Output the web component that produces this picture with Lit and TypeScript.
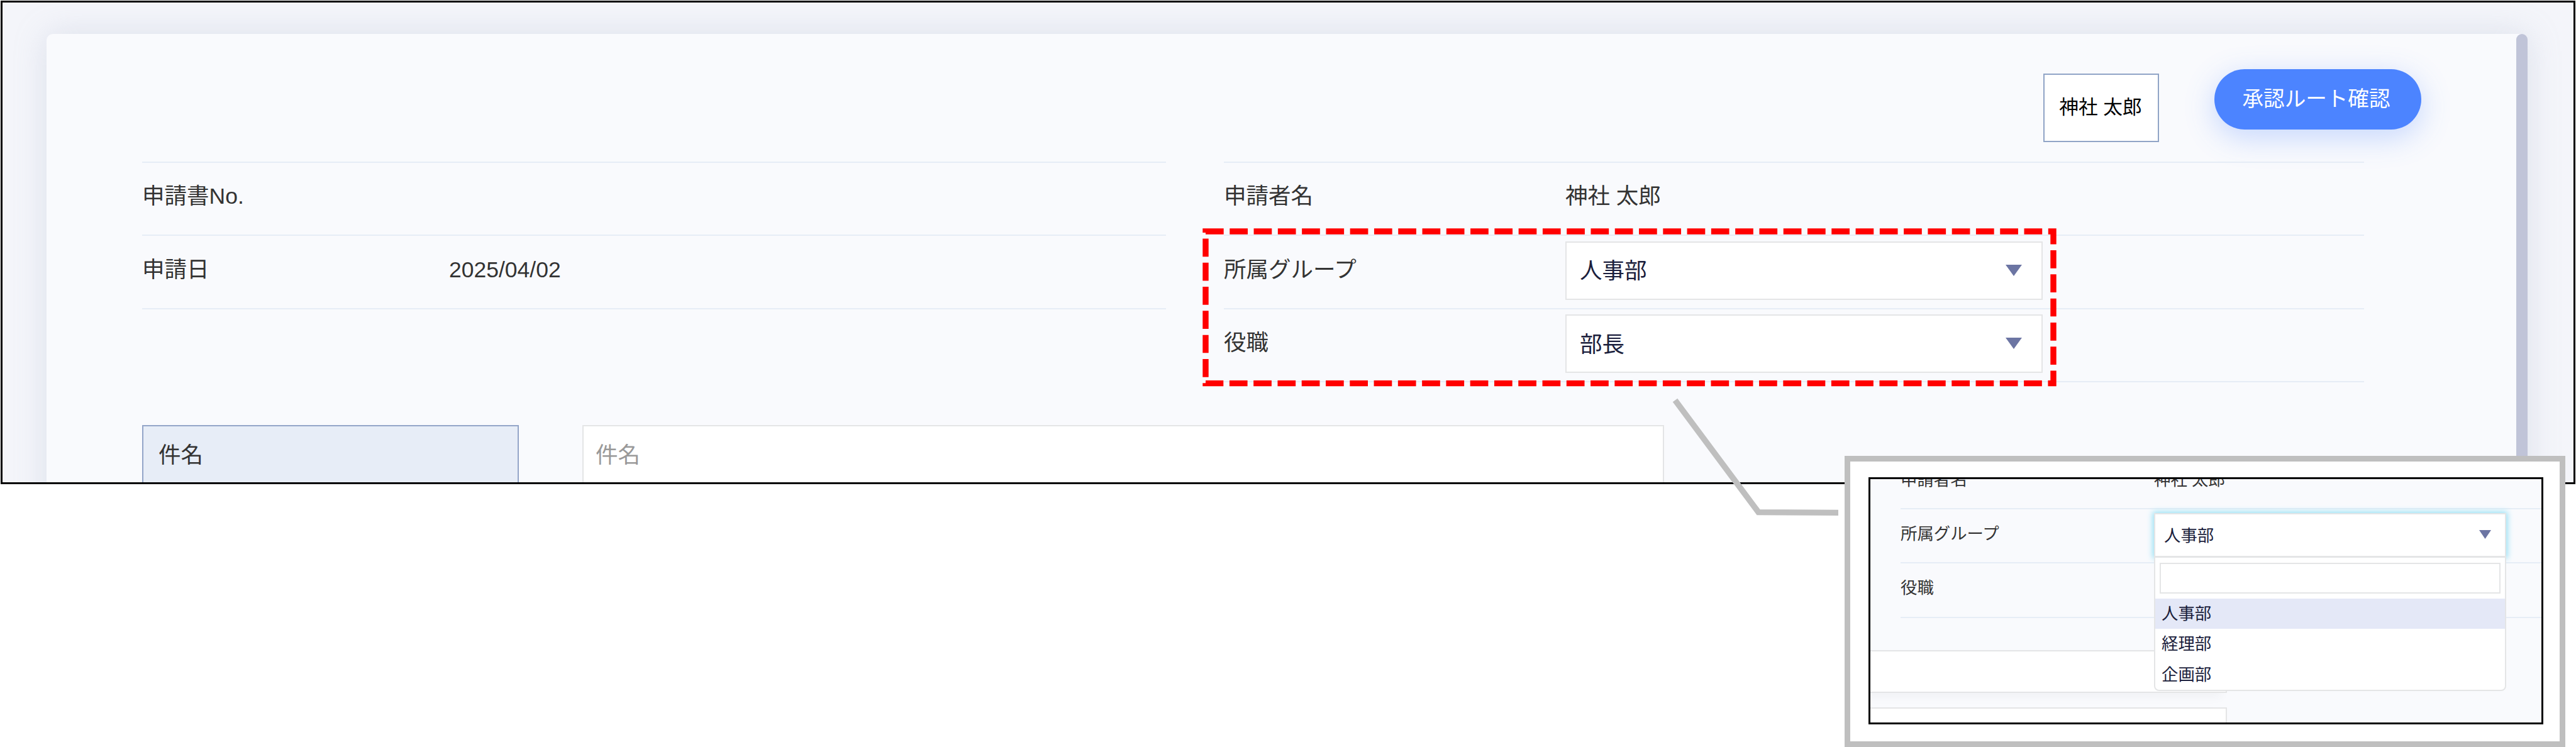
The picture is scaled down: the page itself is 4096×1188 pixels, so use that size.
import { LitElement, html, css, nothing } from "lit";
import { customElement, property } from "lit/decorators.js";

@customElement("select-box")
export class SelectBox extends LitElement {
  @property({ type: String }) value = "";
  @property({ type: Boolean, reflect: true }) small = false;
  @property({ type: Boolean, reflect: true }) open = false;
  @property({ attribute: false }) options: string[] = [];

  static override styles = css`
    :host {
      display: block;
      position: relative;
      box-sizing: border-box;
      width: 759px;
      height: 93px;
      color: #1b1e3c;
    }
    :host([small]) {
      width: 560px;
      height: 70px;
    }

    .control {
      display: flex;
      align-items: center;
      justify-content: space-between;
      box-sizing: border-box;
      height: 100%;
      padding: 0 31px 0 21px;
      background: #fff;
      border: 2px solid #e4e5e6;
    }
    :host([small]) .control {
      padding: 0 22px 0 14px;
    }
    :host([open]) .control {
      box-shadow: 0 0 9px 2px #92e0f5;
    }

    .text {
      padding-top: 3px;
    }

    .arrow {
      width: 26px;
      height: 18px;
      margin-bottom: 2px;
      fill: #6c75a3;
    }
    :host([small]) .arrow {
      width: 19px;
      height: 14px;
    }

    .menu {
      position: absolute;
      top: 100%;
      left: 0;
      right: 0;
      box-sizing: border-box;
      background: #fff;
      border: 2px solid #e4e5e6;
      border-top-width: 1px;
      border-radius: 0 0 8px 8px;
      overflow: hidden;
    }
    .search {
      height: 45px;
      margin: 8px 7px;
      border: 2px solid #e4e5e6;
    }
    .option {
      height: 48.5px;
      line-height: 48px;
      padding-left: 10px;
    }
    .option.selected {
      background: #e4e8f7;
    }
  `;

  override render() {
    return html`
      <div class="control">
        <span class="text">${this.value}</span>
        <svg class="arrow" viewBox="0 0 26 18" preserveAspectRatio="none" aria-hidden="true">
          <path d="M0 0H26L13 18Z" />
        </svg>
      </div>
      ${this.open
        ? html`
            <div class="menu" role="listbox">
              <div class="search"></div>
              ${this.options.map(
                (o) => html`
                  <div class="option ${o === this.value ? "selected" : ""}" role="option">${o}</div>
                `,
              )}
            </div>
          `
        : nothing}
    `;
  }
}

@customElement("app-root")
export class AppRoot extends LitElement {
  private _groups = ["人事部", "経理部", "企画部"];

  static override styles = css`
    :host {
      display: block;
      position: relative;
      width: 4096px;
      height: 1188px;
      overflow: hidden;
      background: #fff;
      color: #333;
      font-family: "Liberation Sans", "Noto Sans CJK JP", sans-serif;
      font-size: 35.5px;
      line-height: 1.4;
    }

    * {
      box-sizing: border-box;
    }

    .window {
      width: 4094px;
      height: 769px;
      margin: 1px;
      padding: 50px 73px 0 70px;
      border: 3px solid #000;
      background: #f4f5fa;
      overflow: hidden;
    }

    .card {
      display: flex;
      height: 900px;
      border-radius: 10px 10px 0 0;
      background: #f9fafd;
      box-shadow: 0 0 52px rgba(150, 165, 195, 0.26);
    }
    .content {
      flex: 1;
    }
    .scrollbar {
      width: 18px;
      border-radius: 9px;
      background: #c0c4d8;
    }

    .toolbar {
      display: flex;
      justify-content: flex-end;
      align-items: flex-start;
      gap: 88px;
      height: 203px;
      padding: 56px 151px 0 0;
    }
    .stamp {
      display: flex;
      align-items: center;
      justify-content: center;
      width: 184px;
      height: 109px;
      margin-top: 7px;
      padding-right: 2px;
      border: 2px solid #90a4c6;
      background: #fff;
      color: #000;
      font-size: 30.7px;
    }
    .route {
      width: 329px;
      height: 96px;
      padding: 0 5px 1px 0;
      border: none;
      border-radius: 48px;
      background: #4c84ff;
      box-shadow: 0 12px 48px rgba(76, 132, 255, 0.3);
      color: #fff;
      font: inherit;
      font-size: 33.6px;
    }

    .columns {
      display: grid;
      grid-template-columns: 1628px 1813px;
      gap: 92px;
      padding-left: 152px;
    }
    .list {
      border-top: 2px solid #e6edf6;
    }
    .row {
      display: flex;
      align-items: center;
      height: 116.4px;
      border-bottom: 2px solid #e6edf6;
    }
    .label,
    .value {
      padding-bottom: 6px;
    }
    .label {
      width: 543px;
    }
    .left .label {
      width: 488px;
    }
    select-box {
      margin-bottom: 4px;
    }

    .subject {
      display: flex;
      gap: 101px;
      margin-top: 68px;
      padding-left: 152px;
    }
    .cell {
      width: 599px;
      height: 95px;
      line-height: 93px;
      padding-left: 24px;
      border: 2px solid #93a5c8;
      background: #e7edf7;
    }
    .cell.input {
      width: 1720px;
      padding-left: 19px;
      border-color: #e4e5e6;
      background: #fff;
      color: #999;
    }

    /* annotation marks drawn over the form */
    .marks {
      position: absolute;
      inset: 0;
      width: 4096px;
      height: 1188px;
      fill: none;
    }

    .detail {
      position: absolute;
      left: 2933px;
      top: 725px;
      width: 1146px;
      height: 463px;
      padding: 25px 26px 0 29px;
      border: 9px solid #bfbfbf;
      background: #fff;
      font-size: 26.4px;
    }
    .crop {
      height: 393px;
      border: 3px solid #000;
      background: #f9fafd;
      overflow: hidden;
    }
    .crop .list {
      margin: -38px 0 0 48px;
      border: none;
    }
    .crop .row {
      height: 86.2px;
    }
    .crop .label {
      width: 403px;
    }
    .crop .label,
    .crop .value {
      padding-bottom: 5px;
    }
    .crop select-box {
      margin-bottom: 3px;
    }
    .line-field {
      width: 567px;
      height: 68px;
      margin: 51px 0 23px;
      border: 2px solid #e4e5e6;
      border-left: none;
      background: #fff;
      box-shadow: -8px 8px 14px rgba(0, 0, 0, 0.03);
    }
    .line-field + .line-field {
      margin: 0;
    }
  `;

  private _row(label: string, value: unknown = nothing) {
    return html`
      <div class="row">
        <span class="label">${label}</span>
        ${typeof value === "string" ? html`<span class="value">${value}</span>` : value}
      </div>
    `;
  }

  private _renderForm() {
    return html`
      <div class="window">
        <div class="card">
          <div class="content">
            <div class="toolbar">
              <div class="stamp">神社 太郎</div>
              <button class="route">承認ルート確認</button>
            </div>
            <div class="columns">
              <div class="left">
                <div class="list">
                  ${this._row("申請書No.")} ${this._row("申請日", "2025/04/02")}
                </div>
              </div>
              <div class="list">
                ${this._row("申請者名", "神社 太郎")}
                ${this._row("所属グループ", html`<select-box value="人事部"></select-box>`)}
                ${this._row("役職", html`<select-box value="部長"></select-box>`)}
              </div>
            </div>
            <div class="subject">
              <div class="cell">件名</div>
              <div class="cell input">件名</div>
            </div>
          </div>
          <div class="scrollbar"></div>
        </div>
      </div>
    `;
  }

  private _renderDetail() {
    return html`
      <div class="detail">
        <div class="crop">
          <div class="list">
            ${this._row("申請者名", "神社 太郎")}
            ${this._row(
              "所属グループ",
              html`<select-box small open value="人事部" .options=${this._groups}></select-box>`,
            )}
            ${this._row("役職")}
          </div>
          <div class="line-field"></div>
          <div class="line-field"></div>
        </div>
      </div>
    `;
  }

  override render() {
    return html`
      ${this._renderForm()}
      <svg class="marks" viewBox="0 0 4096 1188" aria-hidden="true">
        <rect
          x="1917"
          y="368"
          width="1348"
          height="241.6"
          stroke="#f00"
          stroke-width="9.4"
          stroke-dasharray="28.71 9.57"
        />
        <path d="M2663.5 636.5L2796 814.6L2923 815.4" stroke="#bfbfbf" stroke-width="9.4" />
      </svg>
      ${this._renderDetail()}
    `;
  }
}

declare global {
  interface HTMLElementTagNameMap {
    "app-root": AppRoot;
    "select-box": SelectBox;
  }
}
